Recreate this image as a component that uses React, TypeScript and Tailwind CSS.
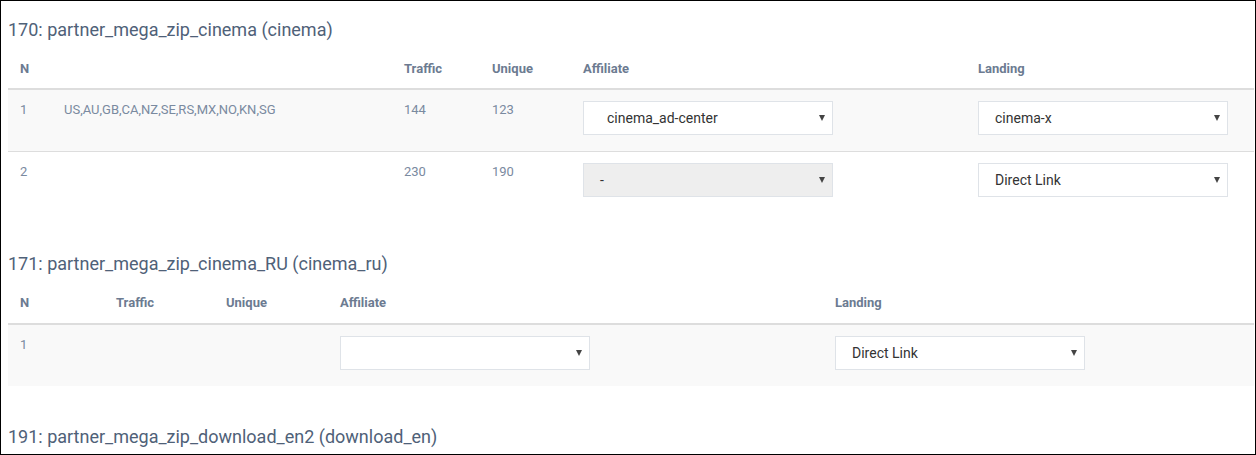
import React from "react";

const font = { fontFamily: "Roboto, 'Noto Sans', Arial, sans-serif" };

function Sel({ text, disabled, indent }: { text: string; disabled?: boolean; indent?: boolean }) {
  return (
    <div
      className={`relative flex h-[34px] w-[250px] items-center border border-[#dfe3e8] text-[14px] text-[#333] ${
        disabled ? "bg-[#eeeeee]" : "bg-white"
      } ${indent ? "pl-[23px]" : "pl-[16px]"}`}
    >
      <span>{text}</span>
      <span className="absolute right-[7px] top-[13px] h-0 w-0 border-l-[3px] border-r-[3px] border-t-[6px] border-l-transparent border-r-transparent border-t-[#444]" />
    </div>
  );
}

const H = "text-[13px] leading-[17px] font-bold text-[#6c7b91]";
const T = "text-[13px] leading-[17px] text-[#7a8aa0]";
const TITLE = "text-[18px] leading-[22px] text-[#4f6178]";

export default function App() {
  return (
    <div style={font} className="h-[455px] w-[1256px] overflow-hidden border border-black bg-white">
      <div className="pl-[7px] pr-[1px]">
        <div className={`pt-[18px] ${TITLE}`}>170: partner_mega_zip_cinema (cinema)</div>
        <div className="grid grid-cols-[44px_340px_88px_91px_395px_1fr] pt-[9px]">
          <div className={`${H} h-[40px] border-b-2 border-[#dddddd] pl-[12px] pt-[10px]`}>N</div>
          <div className="h-[40px] border-b-2 border-[#dddddd]" />
          <div className={`${H} h-[40px] border-b-2 border-[#dddddd] pl-[12px] pt-[10px]`}>Traffic</div>
          <div className={`${H} h-[40px] border-b-2 border-[#dddddd] pl-[12px] pt-[10px]`}>Unique</div>
          <div className={`${H} h-[40px] border-b-2 border-[#dddddd] pl-[12px] pt-[10px]`}>Affiliate</div>
          <div className={`${H} h-[40px] border-b-2 border-[#dddddd] pl-[12px] pt-[10px]`}>Landing</div>

          <div className={`${T} h-[62px] border-b border-[#dddddd] bg-[#f9f9f9] pl-[12px] pt-[11px]`}>1</div>
          <div className={`${T} h-[62px] border-b border-[#dddddd] bg-[#f9f9f9] pl-[12px] pt-[11px] text-[#6e7d93]`}>US,AU,GB,CA,NZ,SE,RS,MX,NO,KN,SG</div>
          <div className={`${T} h-[62px] border-b border-[#dddddd] bg-[#f9f9f9] pl-[12px] pt-[11px]`}>144</div>
          <div className={`${T} h-[62px] border-b border-[#dddddd] bg-[#f9f9f9] pl-[12px] pt-[11px]`}>123</div>
          <div className="h-[62px] border-b border-[#dddddd] bg-[#f9f9f9] pl-[12px] pt-[11px]"><Sel text="cinema_ad-center" indent /></div>
          <div className="h-[62px] border-b border-[#dddddd] bg-[#f9f9f9] pl-[12px] pt-[11px]"><Sel text="cinema-x" /></div>

          <div className={`${T} h-[60px] pl-[12px] pt-[11px]`}>2</div>
          <div className="h-[60px]" />
          <div className={`${T} h-[60px] pl-[12px] pt-[11px]`}>230</div>
          <div className={`${T} h-[60px] pl-[12px] pt-[11px]`}>190</div>
          <div className="h-[60px] pl-[12px] pt-[11px]"><Sel text="-" disabled /></div>
          <div className="h-[60px] pl-[12px] pt-[11px]"><Sel text="Direct Link" /></div>
        </div>

        <div className={`pt-[41px] ${TITLE}`}>171: partner_mega_zip_cinema_RU (cinema_ru)</div>
        <div className="grid grid-cols-[96px_110px_114px_495px_1fr] pt-[9px]">
          <div className={`${H} h-[41px] border-b-2 border-[#dddddd] pl-[12px] pt-[10px]`}>N</div>
          <div className={`${H} h-[41px] border-b-2 border-[#dddddd] pl-[12px] pt-[10px]`}>Traffic</div>
          <div className={`${H} h-[41px] border-b-2 border-[#dddddd] pl-[12px] pt-[10px]`}>Unique</div>
          <div className={`${H} h-[41px] border-b-2 border-[#dddddd] pl-[12px] pt-[10px]`}>Affiliate</div>
          <div className={`${H} h-[41px] border-b-2 border-[#dddddd] pl-[12px] pt-[10px]`}>Landing</div>

          <div className={`${T} h-[61px] bg-[#f9f9f9] pl-[12px] pt-[11px]`}>1</div>
          <div className="h-[61px] bg-[#f9f9f9]" />
          <div className="h-[61px] bg-[#f9f9f9]" />
          <div className="h-[61px] bg-[#f9f9f9] pl-[12px] pt-[11px]"><Sel text="" /></div>
          <div className="h-[61px] bg-[#f9f9f9] pl-[12px] pt-[11px]"><Sel text="Direct Link" /></div>
        </div>

        <div className={`pt-[40px] ${TITLE}`}>191: partner_mega_zip_download_en2 (download_en)</div>
      </div>
    </div>
  );
}
